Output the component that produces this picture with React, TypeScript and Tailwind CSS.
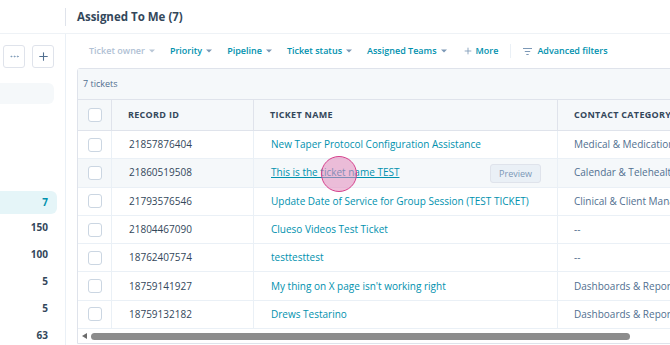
import { Plus, MoreHorizontal } from 'lucide-react'

type Ticket = {
  id: string
  name: string
  category: string
  hover?: boolean
}

const tickets: Ticket[] = [
  { id: '21857876404', name: 'New Taper Protocol Configuration Assistance', category: 'Medical & Medication Management' },
  { id: '21860519508', name: 'This is the ticket name TEST', category: 'Calendar & Telehealth', hover: true },
  { id: '21793576546', name: 'Update Date of Service for Group Session (TEST TICKET)', category: 'Clinical & Client Management' },
  { id: '21804467090', name: 'Clueso Videos Test Ticket', category: '--' },
  { id: '18762407574', name: 'testtesttest', category: '--' },
  { id: '18759141927', name: "My thing on X page isn't working right", category: 'Dashboards & Reporting' },
  { id: '18759132182', name: 'Drews Testarino', category: 'Dashboards & Reporting' },
]

const counts = ['150', '100', '5', '5', '63']

const filters = ['Priority', 'Pipeline', 'Ticket status', 'Assigned Teams']

function Caret({ muted }: { muted?: boolean }) {
  return (
    <svg width="6" height="4" viewBox="0 0 6 4" className={muted ? 'text-[#b9c7d6]' : 'text-[#7c98b6]'}>
      <path d="M0 0.5h6L3 3.5z" fill="currentColor" />
    </svg>
  )
}

function Checkbox() {
  return <span className="block w-[14px] h-[14px] rounded-[3px] border border-[#cbd6e2] bg-white" />
}

export default function App() {
  return (
    <div className="w-[670px] h-[345px] overflow-hidden bg-white text-[#33475b] font-['Open_Sans',sans-serif]">
      {/* Header */}
      <div className="flex items-center h-[34px] border-b border-[#eef2f6]">
        <div className="w-[66px] h-[18px] border-r border-[#dfe3eb]" />
        <h1 className="ml-[11px] text-[11.5px] font-bold text-[#33475b]">Assigned To Me (7)</h1>
      </div>

      <div className="flex h-[311px]">
        {/* Sidebar */}
        <div className="w-[66px] shrink-0 border-r border-[#eaf0f6] pr-[11px]">
          <div className="flex gap-[7px] pl-[3px] mt-[11px]">
            <button className="w-[22px] h-[23px] flex items-center justify-center rounded-[3px] border border-[#dfe3eb] text-[#7c98b6]">
              <MoreHorizontal size={11} />
            </button>
            <button className="w-[22px] h-[23px] flex items-center justify-center rounded-[3px] border border-[#dfe3eb] text-[#516f90]">
              <Plus size={13} strokeWidth={2} />
            </button>
          </div>
          <div className="mt-[15px] h-[21px] rounded-r-[6px] bg-[#f5f8fa]" />
          <div className="mt-[87px] h-[23px] -mr-[3px] rounded-r-[6px] bg-[#e5f5f8] flex items-center justify-end pr-[9px] text-[10px] font-bold text-[#0091ae]">
            7
          </div>
          {counts.map((c, i) => (
            <div key={i} className="h-[27px] flex items-center justify-end pr-[6px] text-[10px] font-bold text-[#33475b]">
              {c}
            </div>
          ))}
        </div>

        {/* Main */}
        <div className="flex-1 min-w-0 overflow-hidden">
          <div className="flex items-center h-[34px] pl-[23px] text-[9px] font-semibold text-[#0091ae] whitespace-nowrap">
            <span className="flex items-center gap-[4px] text-[#b0c1d4]">
              Ticket owner <Caret muted />
            </span>
            {filters.map(f => (
              <span key={f} className="flex items-center gap-[4px] ml-[15px]">
                {f} <Caret />
              </span>
            ))}
            <span className="flex items-center gap-[3px] ml-[16px]">
              <Plus size={10} strokeWidth={2} className="text-[#7c98b6]" /> More
            </span>
            <span className="ml-[12px] w-px h-[14px] bg-[#eaf0f6]" />
            <span className="flex items-center gap-[5px] ml-[12px]">
              <svg width="9" height="7" viewBox="0 0 9 7" className="text-[#7c98b6]">
                <path d="M0 0.5h9M1.8 3.5h5.4M3.3 6.5h2.4" stroke="currentColor" strokeWidth="1" />
              </svg>
              Advanced filters
            </span>
          </div>

          {/* Table */}
          <div className="ml-[11px] w-[700px] border border-[#dfe3eb] rounded-tl-[3px]">
            <div className="h-[31px] bg-[#f5f8fa] flex items-center pl-[5px] text-[9px] text-[#516f90] border-b border-[#dfe3eb]">
              7 tickets
            </div>
            <div className="flex h-[31px] bg-[#f5f8fa] border-b border-[#dfe3eb] text-[9px] font-bold tracking-[0.3px] text-[#33475b]">
              <div className="w-[34px] flex items-center justify-center border-r border-[#dfe3eb]">
                <Checkbox />
              </div>
              <div className="w-[142px] flex items-center pl-[16px] border-r border-[#dfe3eb]">RECORD ID</div>
              <div className="w-[304px] flex items-center pl-[16px] border-r border-[#dfe3eb]">TICKET NAME</div>
              <div className="flex-1 flex items-center pl-[16px]">CONTACT CATEGORY</div>
            </div>
            {tickets.map(t => (
              <div
                key={t.id}
                className={`flex h-[28.3px] border-b border-[#eaf0f6] text-[10px] ${t.hover ? 'bg-[#f5f8fa]' : 'bg-white'}`}
              >
                <div className="w-[34px] flex items-center justify-center border-r border-[#eaf0f6]">
                  <Checkbox />
                </div>
                <div className="w-[142px] flex items-center pl-[17px] border-r border-[#eaf0f6] text-[#33475b]">{t.id}</div>
                <div className="w-[304px] relative flex items-center pl-[17px] border-r border-[#eaf0f6]">
                  <span className={`text-[#0091ae] whitespace-nowrap ${t.hover ? 'underline' : ''}`}>{t.name}</span>
                  {t.hover && (
                    <>
                      <span className="absolute left-[67px] top-[-3px] w-[36px] h-[36px] rounded-full bg-[#e28bbb]/55 border-[1.5px] border-[#d6408c]" />
                      <span className="absolute right-[16px] top-[5px] h-[19px] px-[8px] flex items-center rounded-[3px] border border-[#dfe3eb] bg-[#eaf0f6] text-[9px] text-[#7c98b6]">
                        Preview
                      </span>
                    </>
                  )}
                </div>
                <div className="flex-1 flex items-center pl-[16px] whitespace-nowrap text-[#516f90]">{t.category}</div>
              </div>
            ))}
            {/* Scrollbar */}
            <div className="flex items-center h-[14px] pl-[4px] gap-[4px]">
              <svg width="5" height="6" viewBox="0 0 5 6">
                <path d="M5 0v6L0 3z" fill="#6b6b6b" />
              </svg>
              <div className="w-[539px] h-[7px] rounded-full bg-[#8c8c8c]" />
            </div>
          </div>
        </div>
      </div>
    </div>
  )
}
